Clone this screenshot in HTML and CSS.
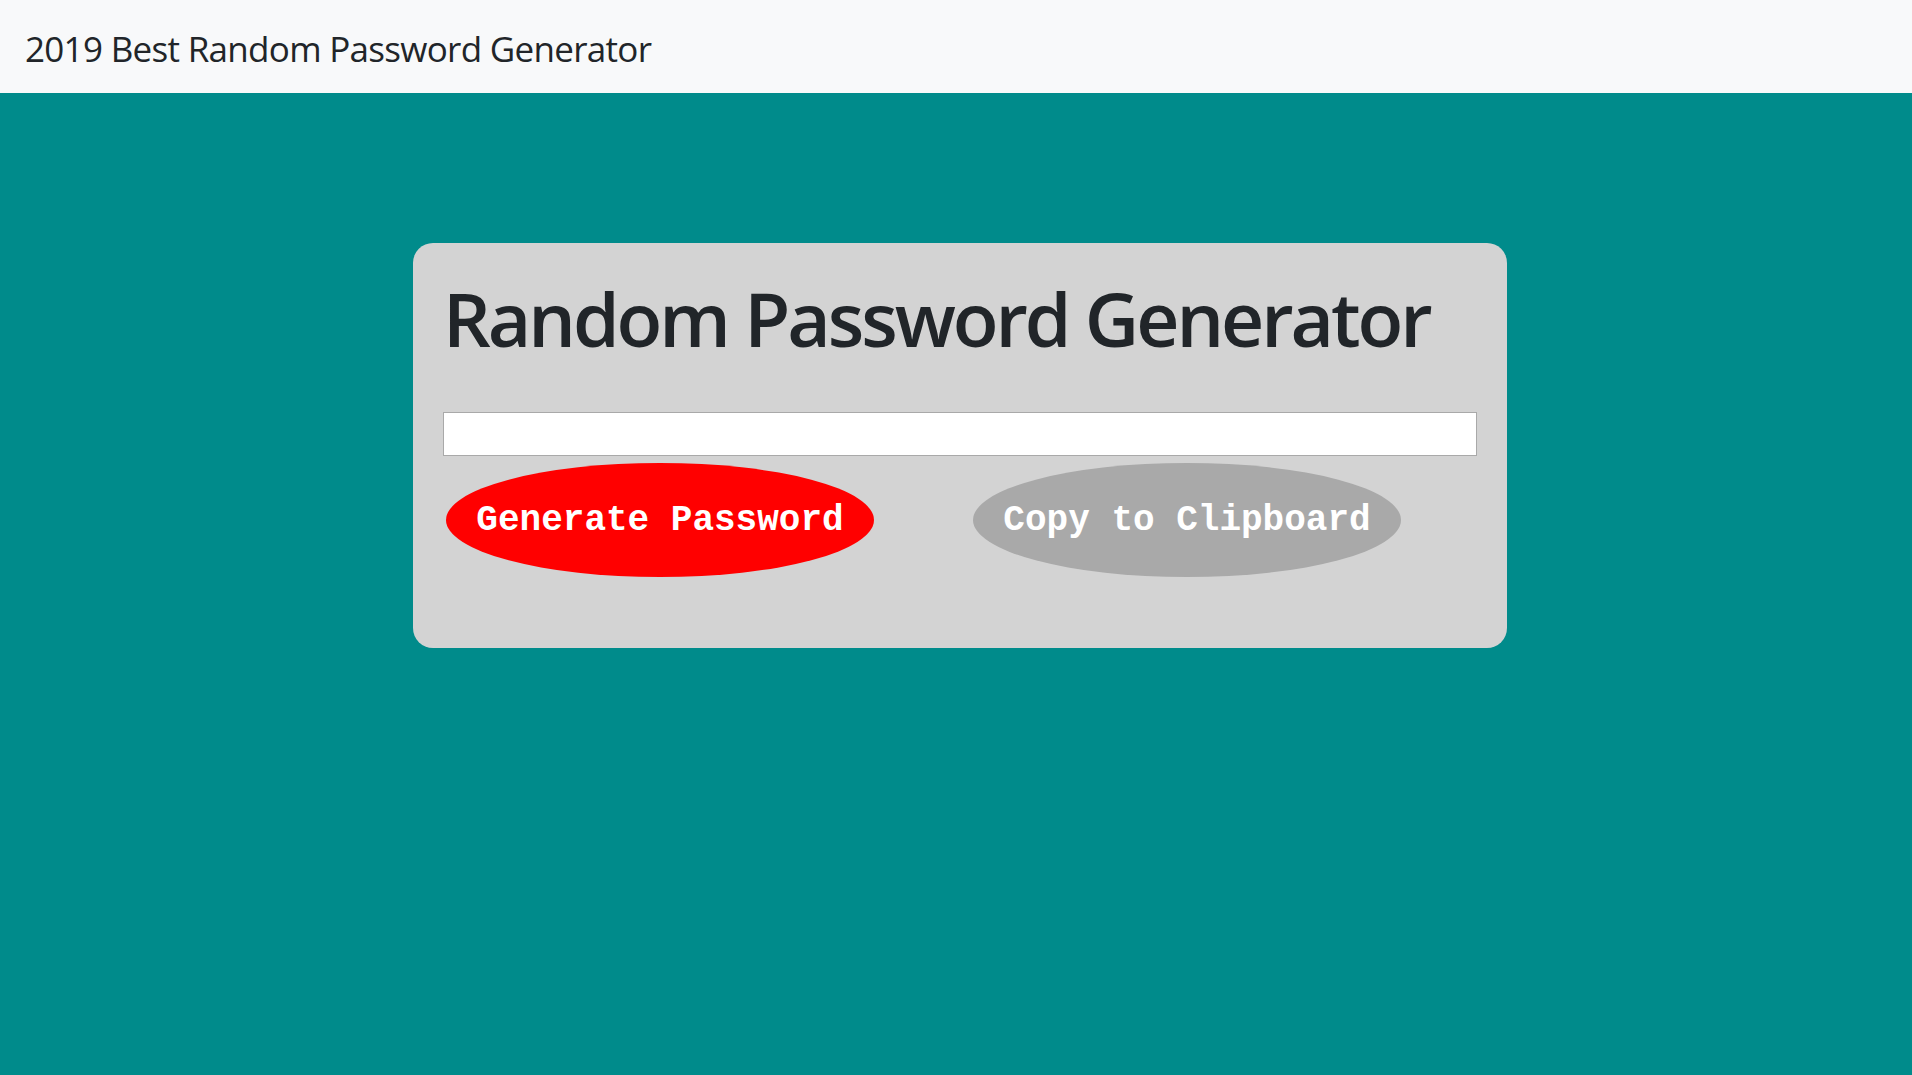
FILE: index.html
```html
<!DOCTYPE html>
<html lang="en">
<head>
<meta charset="utf-8">
<title>2019 Best Random Password Generator</title>
<link rel="stylesheet" href="styles.css">
</head>
<body>
<nav class="navbar">
  <span class="brand">2019 Best Random Password Generator</span>
</nav>
<main class="stage">
  <section class="card">
    <h1 class="title">Random Password Generator</h1>
    <input class="output" type="text" readonly>
    <div class="actions">
      <button class="btn btn-generate" type="button">Generate Password</button>
      <button class="btn btn-copy" type="button">Copy to Clipboard</button>
    </div>
  </section>
</main>
</body>
</html>
```
FILE: styles.css
```css
html, body {
  margin: 0;
  padding: 0;
  height: 100%;
}
body {
  background: #008b8b;
  font-family: "Open Sans", "Noto Sans", sans-serif;
  color: #212529;
  display: flex;
  flex-direction: column;
}
.navbar {
  height: 93px;
  background: #f8f9fa;
  display: flex;
  align-items: center;
  padding: 0 0 0 25px;
  flex-shrink: 0;
}
.brand {
  font-size: 35px;
  line-height: 1;
  letter-spacing: -0.7px;
  color: #212529;
  padding-top: 4px;
}
.stage {
  display: flex;
  justify-content: center;
  padding: 150px 0 0 8px;
}
.card {
  box-sizing: border-box;
  width: 1094px;
  background: #d3d3d3;
  border-radius: 20px;
  padding: 30px 30px 71px 30px;
}
.title {
  margin: 0 0 48px 0;
  font-size: 75px;
  line-height: 91px;
  font-weight: 600;
  letter-spacing: -3.05px;
  color: #212529;
}
.output {
  display: block;
  box-sizing: border-box;
  width: 1034px;
  height: 44px;
  margin: 0;
  border: 1px solid #a9a9a9;
  background: #fff;
  padding: 0 8px;
  font-size: 20px;
  outline: none;
}
.actions {
  display: flex;
  gap: 99px;
  margin-top: 7px;
  padding-left: 3px;
}
.btn {
  box-sizing: border-box;
  width: 428px;
  height: 114px;
  border: none;
  border-radius: 50%;
  font-family: "Liberation Mono", "Courier New", monospace;
  font-weight: bold;
  font-size: 36px;
  color: #fff;
  padding: 0;
  cursor: pointer;
}
.btn-generate {
  background: #ff0000;
}
.btn-copy {
  background: #a9a9a9;
}
```
